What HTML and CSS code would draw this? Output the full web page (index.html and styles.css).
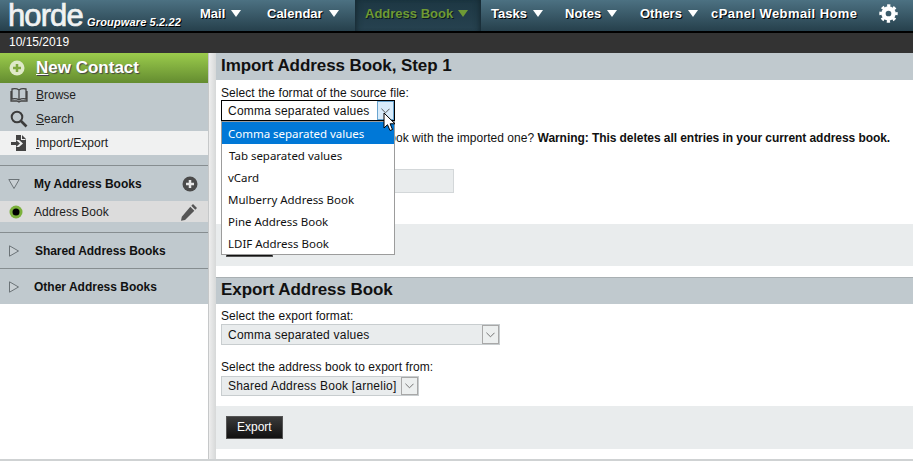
FILE: index.html
```html
<!DOCTYPE html>
<html lang="en">
<head>
<meta charset="utf-8">
<title>Import Address Book</title>
<link rel="stylesheet" href="styles.css">
</head>
<body>
<header class="topbar">
  <div class="brand"><span class="logo">horde</span><span class="version">Groupware 5.2.22</span></div>
  <nav class="nav">
    <a class="nav-item nav-mail">Mail<i class="tri"></i></a>
    <a class="nav-item nav-cal">Calendar<i class="tri"></i></a>
    <a class="nav-item nav-active">Address Book<i class="tri"></i></a>
    <a class="nav-item nav-tasks">Tasks<i class="tri"></i></a>
    <a class="nav-item nav-notes">Notes<i class="tri"></i></a>
    <a class="nav-item nav-others">Others<i class="tri"></i></a>
    <a class="nav-item nav-cpanel">cPanel Webmail Home</a>
    <svg class="gear" viewBox="0 0 20 20" width="19" height="19"><circle cx="10" cy="10" r="5.300" fill="none" stroke="#fff" stroke-width="4.600"/><circle cx="10" cy="10" r="8" fill="none" stroke="#fff" stroke-width="3.400" stroke-dasharray="3.280 3" stroke-dashoffset="1.640"/></svg>
  </nav>
</header>
<div class="datebar">10/15/2019</div>
<div class="layout">
  <aside class="sidebar">
    <div class="new-contact">
      <svg class="plus" viewBox="0 0 16 16" width="16" height="16"><circle cx="8" cy="8" r="7.500" fill="#dfe9c8"/><path d="M8 4v8M4 8h8" stroke="#7fa83e" stroke-width="2.500"/></svg>
      <span><u>N</u>ew Contact</span>
    </div>
    <div class="tools">
      <div class="tool">
        <svg class="tool-icon" viewBox="0 0 18 16" width="18" height="16"><path fill="none" stroke="#444" stroke-width="1.300" d="M9 3C7 1.500 4 1.500 2 2v10c2-.5 5-.5 7 1 2-1.500 5-1.500 7-1V2c-2-.5-5-.5-7 1zM9 3v10M1 4v10h6l2 1 2-1h6V4"/></svg>
        <span><u>B</u>rowse</span>
      </div>
      <div class="tool">
        <svg class="tool-icon" viewBox="0 0 18 18" width="18" height="18"><circle cx="7" cy="7" r="5.300" fill="none" stroke="#3c3c3c" stroke-width="2"/><path d="M11 11l5.500 5.500" stroke="#3c3c3c" stroke-width="2.600"/></svg>
        <span><u>S</u>earch</span>
      </div>
      <div class="tool tool-active">
        <svg class="tool-icon" viewBox="0 0 18 18" width="18" height="18"><path fill="#444" d="M6 1h6l4 4v12H6v-4h3l4-3.500L9 6H6z"/><path fill="#444" d="M1 8h5V6l4 3.500L6 13v-2H1z"/><path fill="#f0f0f0" d="M12 1v4h4l-1 1h-4V1z"/></svg>
        <span><u>I</u>mport/Export</span>
      </div>
    </div>
    <div class="side-gap"></div>
    <section class="group group-my">
      <div class="group-head">
        <svg class="arrow" viewBox="0 0 12 12" width="12" height="12"><path d="M.8 1.500h10.400L6 10.500z" fill="#c9d0d4" stroke="#6b7377"/></svg>
        <span class="group-title">My Address Books</span>
        <svg class="add" viewBox="0 0 16 16" width="16" height="16"><circle cx="8" cy="8" r="7.500" fill="#4a4a4a"/><path d="M8 4v8M4 8h8" stroke="#e6e6e6" stroke-width="2.500"/></svg>
      </div>
      <div class="book">
        <svg class="radio" viewBox="0 0 14 14" width="14" height="14"><circle cx="7" cy="7" r="6.500" fill="#7cb13c"/><circle cx="7" cy="7" r="3.500" fill="#000"/></svg>
        <span>Address Book</span>
        <svg class="pencil" viewBox="0 0 18 18" width="18" height="18"><path fill="#555" d="M13 1l4 4-1.700 1.700-4-4zM10.300 3.700l4 4L5 17l-4 .8.800-4z"/></svg>
      </div>
    </section>
    <section class="group">
      <div class="group-head">
        <svg class="arrow" viewBox="0 0 12 12" width="12" height="12"><path d="M1.500.8v10.400L10.500 6z" fill="#c9d0d4" stroke="#6b7377"/></svg>
        <span class="group-title title-shared">Shared Address Books</span>
      </div>
    </section>
    <section class="group">
      <div class="group-head">
        <svg class="arrow" viewBox="0 0 12 12" width="12" height="12"><path d="M1.500.8v10.400L10.500 6z" fill="#c9d0d4" stroke="#6b7377"/></svg>
        <span class="group-title">Other Address Books</span>
      </div>
    </section>
  </aside>
  <div class="gutter"></div>
  <main class="main">
    <h1 class="title">Import Address Book, Step 1</h1>
    <div class="form form-import">
      <label class="label">Select the format of the source file:</label>
      <div class="picker">
        <div class="select select-open">
          <span class="select-text">Comma separated values</span>
          <span class="select-btn btn-open"><svg viewBox="0 0 10 6" width="9" height="6"><path d="M.5.500L5 5 9.500.500" fill="none" stroke="#444"/></svg></span>
        </div>
        <ul class="dropdown">
          <li class="option option-on">Comma separated values</li>
          <li class="option option-tab">Tab separated values</li>
          <li class="option">vCard</li>
          <li class="option">Mulberry Address Book</li>
          <li class="option">Pine Address Book</li>
          <li class="option">LDIF Address Book</li>
        </ul>
        <svg class="cursor" viewBox="0 0 13 20" width="13" height="20"><path d="M1 1v15l3.500-3.300L7 18.500l2.500-1-2.400-5.700H12z" fill="#fff" stroke="#000"/></svg>
      </div>
      <p class="warning">Replace your current address book with the imported one? <b class="warning-strong">Warning: This deletes all entries in your current address book.</b></p>
      <div class="file-field"></div>
    </div>
    <div class="actions actions-import"><span class="button">Next</span></div>
    <h1 class="title title-second">Export Address Book</h1>
    <div class="form form-export">
      <label class="label">Select the export format:</label>
      <div class="select select-wide">
        <span class="select-text">Comma separated values</span>
        <span class="select-btn"><svg viewBox="0 0 10 6" width="9" height="6"><path d="M.5.500L5 5 9.500.500" fill="none" stroke="#666"/></svg></span>
      </div>
      <label class="label label-second">Select the address book to export from:</label>
      <div class="select select-fit">
        <span class="select-text">Shared Address Book [arnelio]</span>
        <span class="select-btn"><svg viewBox="0 0 10 6" width="9" height="6"><path d="M.5.500L5 5 9.500.500" fill="none" stroke="#666"/></svg></span>
      </div>
    </div>
    <div class="actions actions-export"><span class="button">Export</span></div>
  </main>
</div>
<div class="page-rule"></div>
</body>
</html>
```
FILE: styles.css
```css
* { box-sizing: border-box; }
html, body { margin: 0; padding: 0; }
body {
  width: 913px;
  height: 464px;
  overflow: hidden;
  background: #fff;
  font-family: "Liberation Sans", Arial, sans-serif;
  font-size: 12px;
  color: #000;
}
.topbar {
  display: flex;
  height: 33px;
  border-bottom: 2px solid #000;
  background: linear-gradient(#4c7182, #26404c);
  color: #fff;
}
.brand { display: flex; align-items: flex-end; width: 200px; flex: none; padding-left: 8px; }
.logo {
  font-size: 31px;
  line-height: 31px;
  letter-spacing: -.9px;
  height: 31px;
  padding-top: 0;
  color: #f0f2f2;
  -webkit-text-stroke: .7px #f0f2f2;
  width: 79px;
  flex: none;
}
.version {
  font-weight: bold;
  font-style: italic;
  font-size: 11px;
  line-height: 12px;
  letter-spacing: .15px;
  margin-bottom: 3px;
  text-shadow: 1px 1px 0 #000;
  white-space: nowrap;
}
.nav { display: flex; flex: 1; align-items: stretch; font-weight: bold; font-size: 13px; }
.nav-item {
  display: flex;
  align-items: center;
  height: 31px;
  padding-bottom: 4px;
  text-shadow: 1px 1px 0 #000;
  white-space: nowrap;
}
.tri {
  width: 0;
  height: 0;
  margin-left: 6px;
  border-left: 5.500px solid transparent;
  border-right: 5.500px solid transparent;
  border-top: 7px solid #fff;
}
.nav-mail { width: 67px; }
.nav-cal { width: 88px; }
.nav-active {
  width: 126px;
  padding-left: 10px;
  background: linear-gradient(#1d3743, #274250);
  box-shadow: inset 6px 0 6px -5px #14252d, inset -6px 0 6px -5px #14252d;
  color: #6e9a35;
  text-shadow: 1px 1px 0 #0c1a20;
}
.nav-active .tri { border-top-color: #6e9a35; margin-left: 5px; }
.nav-tasks { width: 84px; padding-left: 10px; }
.nav-notes { width: 75px; }
.nav-others { width: 71px; }
.nav-cpanel { width: 168px; letter-spacing: .42px; }
.gear { margin-top: 4px; }
.datebar {
  height: 20px;
  background: #333;
  color: #fff;
  line-height: 19px;
  padding-left: 9px;
  font-size: 12px;
}
.layout { display: flex; height: 406px; }
.sidebar { width: 208px; flex: none; }
.gutter {
  width: 8px;
  flex: none;
  background: linear-gradient(90deg, #c6c8c9 0, #c6c8c9 1px, #eeeeee 1px, #d6d8d8 100%);
}
.main { flex: 1; min-width: 0; }
.page-rule { height: 2px; background: #cfd2d3; }
.new-contact {
  display: flex;
  align-items: center;
  height: 30px;
  padding-left: 9px;
  gap: 11px;
  background: linear-gradient(#9bcc4c, #648c30);
  color: #fff;
  font-size: 17px;
  font-weight: bold;
  text-shadow: 1px 1px 1px #444;
}
.tools { background: #c0c9ce; }
.tool {
  display: flex;
  align-items: center;
  height: 24px;
  padding-left: 10px;
  gap: 8px;
  color: #222;
}
.tool-active { background: #f0f1f1; }
.side-gap { height: 10px; background: #c0c9ce; }
.group { background: #c0c9ce; border-top: 1px solid #868d90; }
.group-head {
  display: flex;
  align-items: center;
  height: 35px;
  padding-left: 8px;
  gap: 14px;
}
.group-title { font-weight: bold; color: #111; }
.title-shared { margin-left: 1px; letter-spacing: -.05px; }
.add { margin-left: 26px; }
.group-my { padding-bottom: 10px; }
.book {
  display: flex;
  align-items: center;
  height: 21px;
  padding-left: 9px;
  gap: 11px;
  background: #dcdcdc;
  color: #222;
}
.pencil { margin-left: 60px; }
.title {
  margin: 0;
  height: 27px;
  padding-left: 5px;
  background: #c0c9ce;
  font-size: 17px;
  letter-spacing: -.08px;
  line-height: 25px;
  font-weight: bold;
  color: #111;
}
.title-second { border-top: 1px solid #a9b0b3; line-height: 23px; }
.form { padding: 0 5px; }
.form-import { height: 144px; padding-top: 6px; }
.label { display: block; line-height: 14px; color: #111; letter-spacing: .07px; }
.picker { position: relative; }
.select {
  display: flex;
  align-items: center;
  justify-content: space-between;
  height: 21px;
  border: 1px solid #c8cdcf;
  background: #e9eced;
  letter-spacing: .22px;
  color: #111;
}
.select-text { padding-left: 6px; }
.select-btn {
  display: flex;
  align-items: center;
  justify-content: center;
  width: 17px;
  height: 19px;
  border: 1px solid #a8a8a8;
  background: #ecefef;
}
.select-open {
  width: 174px;
  border-color: #000;
  background: #fff;
}
.btn-open { background: #d9ecfb; border-color: #6aa5d0; }
.dropdown {
  position: absolute;
  top: 21px;
  left: 0;
  width: 174px;
  margin: 0;
  padding: 0;
  list-style: none;
  border: 1px solid #9c9c9c;
  background: #fff;
  z-index: 3;
}
.option {
  height: 22px;
  line-height: 23px;
  padding-left: 6px;
  font-family: "Noto Sans", sans-serif;
  font-size: 11.500px;
  letter-spacing: -.02px;
  color: #111;
}
.option-tab { padding-left: 7px; }
.option-on { background: #0078d7; color: #fff; }
.cursor { position: absolute; top: 12px; left: 162px; z-index: 4; }
.warning { margin: 10px 0 0; line-height: 14px; white-space: nowrap; color: #111; letter-spacing: .03px; }
.warning-strong { letter-spacing: -.06px; }
.file-field {
  width: 233px;
  height: 24px;
  margin-top: 24px;
  background: #e9eced;
  border: 1px solid #d3d7d9;
}
.actions { background: #e9eced; padding-left: 10px; }
.actions-import { height: 42px; margin-bottom: 11px; padding-top: 10px; }
.actions-export { height: 43px; margin-top: 10px; padding-top: 10px; }
.button {
  display: inline-block;
  height: 23px;
  padding: 0 10px;
  line-height: 21px;
  background: linear-gradient(#3a3a3a, #111);
  border: 1px solid #555;
  color: #fff;
}
.form-export { padding-top: 5px; }
.select-wide { width: 279px; margin-top: 1px; }
.select-fit { width: 198px; margin-top: 2px; height: 20px; }
.select-fit .select-btn { height: 18px; }
.label-second { margin-top: 15px; }
```
